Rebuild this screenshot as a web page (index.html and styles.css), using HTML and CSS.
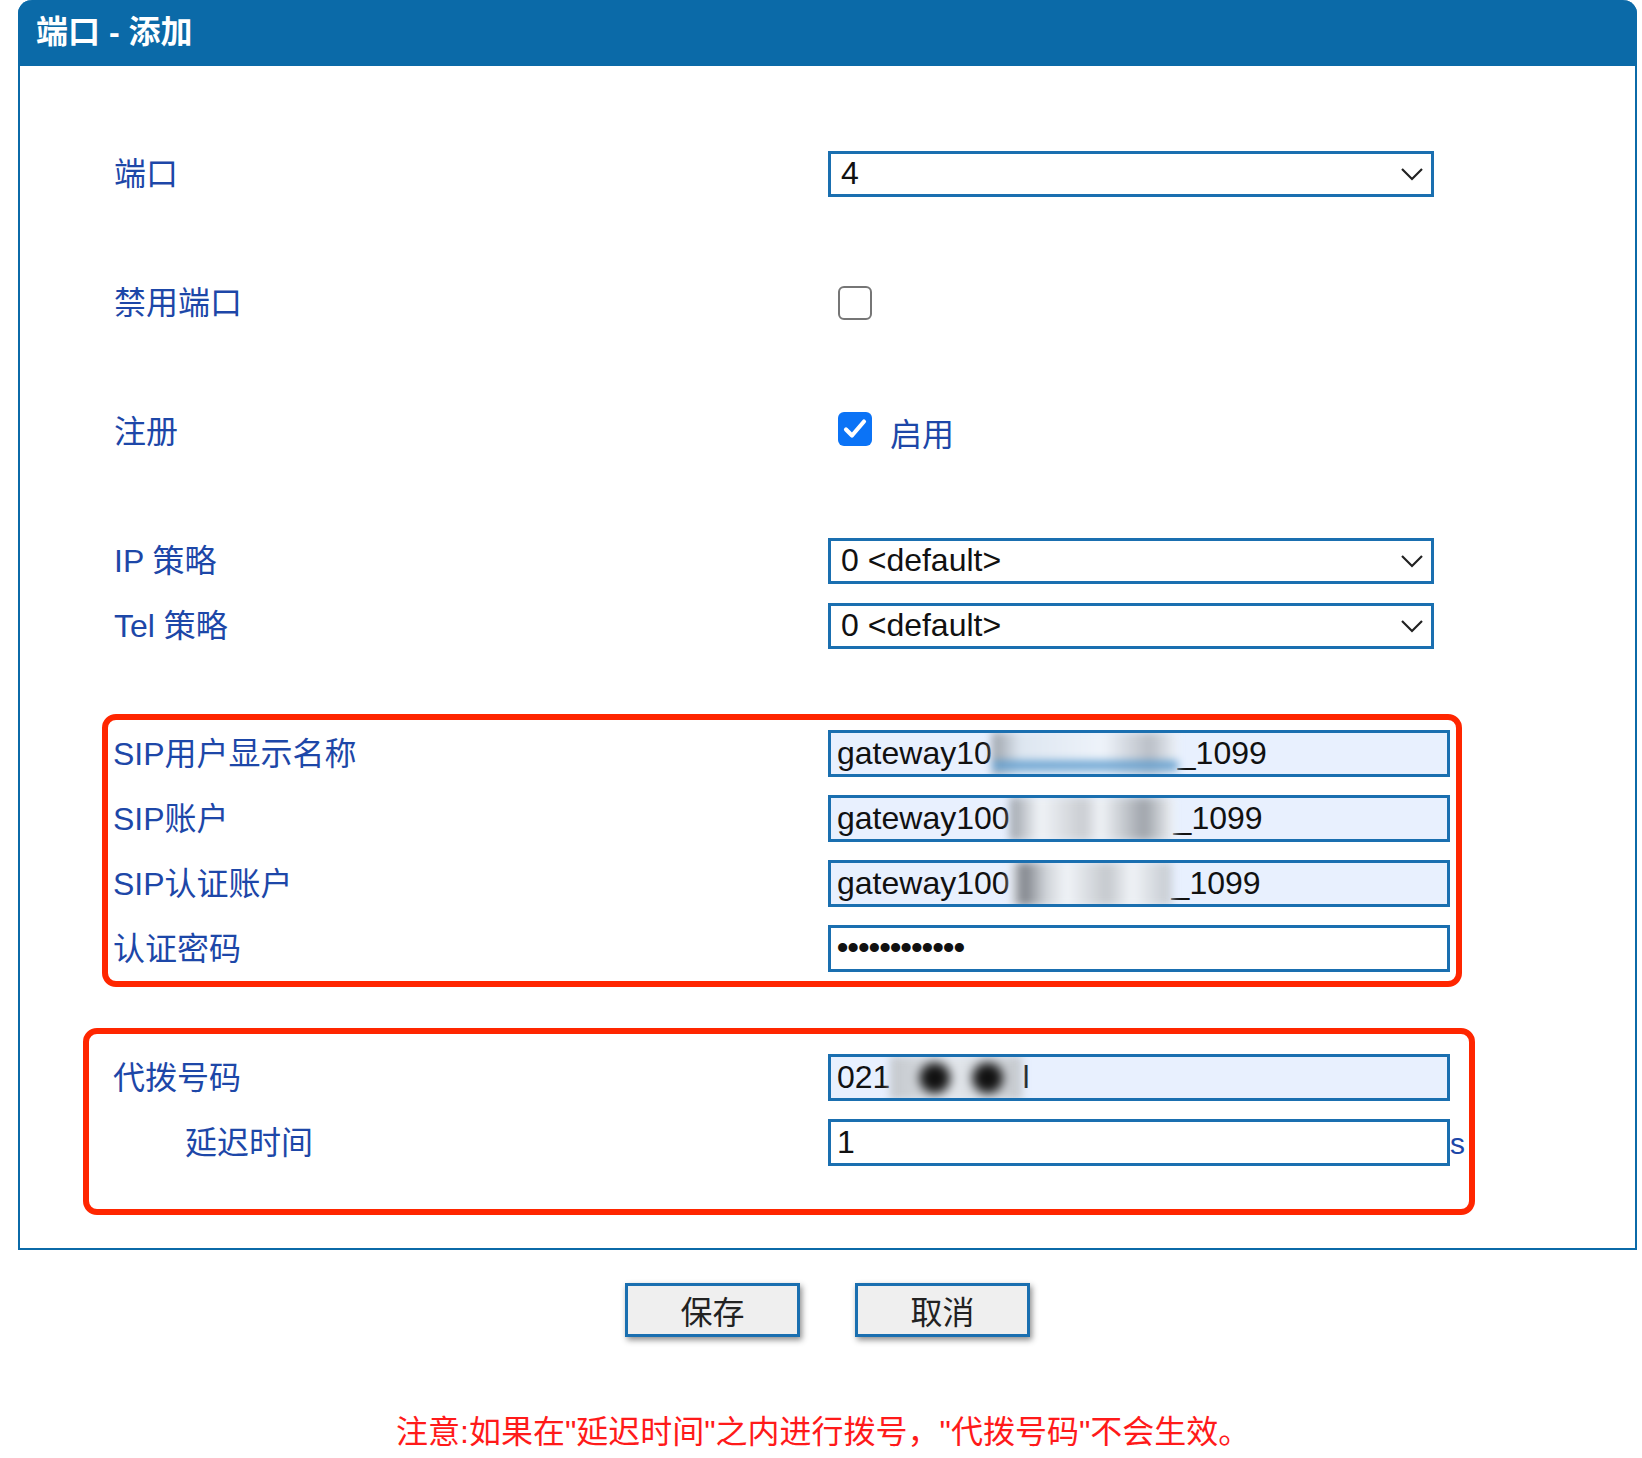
FILE: index.html
```html
<!DOCTYPE html>
<html lang="zh-CN">

<head>
    <meta charset="UTF-8">
    <title>端口 - 添加</title>
    <link rel="stylesheet" href="styles.css">
</head>

<body>
    <div class="panel">
        <div class="panel-title">端口 - 添加</div>

        <div class="panel-body">
            <div class="row spaced">
                <div class="label">端口</div>
                <div class="select-box">
                    <span>4</span>
                    <svg class="chevron" width="24" height="14" viewBox="0 0 24 14">
                        <polyline points="2,2 12,12 22,2" fill="none" stroke="#222" stroke-width="2.2" />
                    </svg>
                </div>
            </div>

            <div class="row spaced">
                <div class="label">禁用端口</div>
                <span class="checkbox"></span>
            </div>

            <div class="row spaced">
                <div class="label">注册</div>
                <span class="checkbox checked">
                    <svg width="34" height="34" viewBox="0 0 34 34">
                        <polyline points="8,17.5 14,23.5 26,9.5" fill="none" stroke="#fff" stroke-width="4.2"
                            stroke-linecap="round" stroke-linejoin="round" />
                    </svg>
                </span>
                <span class="check-text">启用</span>
            </div>

            <div class="row">
                <div class="label">IP 策略</div>
                <div class="select-box">
                    <span>0 &lt;default&gt;</span>
                    <svg class="chevron" width="24" height="14" viewBox="0 0 24 14">
                        <polyline points="2,2 12,12 22,2" fill="none" stroke="#222" stroke-width="2.2" />
                    </svg>
                </div>
            </div>

            <div class="row">
                <div class="label">Tel 策略</div>
                <div class="select-box">
                    <span>0 &lt;default&gt;</span>
                    <svg class="chevron" width="24" height="14" viewBox="0 0 24 14">
                        <polyline points="2,2 12,12 22,2" fill="none" stroke="#222" stroke-width="2.2" />
                    </svg>
                </div>
            </div>

            <!-- SIP account block -->
            <div class="mark mark-sip">
                <div class="row">
                    <div class="label">SIP用户显示名称</div>
                    <div class="text-box filled">gateway10<span class="blur blur-a"></span>_1099</div>
                </div>
                <div class="row">
                    <div class="label">SIP账户</div>
                    <div class="text-box filled">gateway100<span class="blur blur-b"></span>_1099</div>
                </div>
                <div class="row">
                    <div class="label">SIP认证账户</div>
                    <div class="text-box filled">gateway100<span class="blur blur-c"></span>_1099</div>
                </div>
                <div class="row">
                    <div class="label">认证密码</div>
                    <div class="text-box dots">••••••••••••</div>
                </div>
            </div>

            <!-- prefix dial block -->
            <div class="mark mark-dial">
                <div class="row">
                    <div class="label">代拨号码</div>
                    <div class="text-box filled">021<span class="blur blur-d"></span>l</div>
                </div>
                <div class="row">
                    <div class="label indent">延迟时间</div>
                    <div class="text-box">1</div>
                    <span class="unit">s</span>
                </div>
            </div>
        </div>
    </div>

    <div class="actions">
        <button class="btn">保存</button>
        <button class="btn">取消</button>
    </div>

    <p class="note">注意:如果在"延迟时间"之内进行拨号，"代拨号码"不会生效。</p>
</body>

</html>
```

FILE: styles.css
```css
/* page */
body {
    margin: 0;
    background-color: white;
    font-family: "Liberation Sans", "Noto Sans CJK SC", sans-serif;
}

.panel {
    margin-left: 18px;
    width: 1619px;
    box-sizing: border-box;
    border: 2px solid #0b6aa8;
    border-top: none;
    border-radius: 14px 14px 0 0;
}

.panel-title {
    height: 66px;
    margin: 0 -2px;
    padding-left: 18px;
    background-color: #0b6aa8;
    border-radius: 14px 14px 0 0;
    color: white;
    font-size: 32px;
    font-weight: bold;
    line-height: 64px;
}

.panel-body {
    padding: 75px 0 33px 94px;
}

/* form rows */
.row {
    display: flex;
    align-items: center;
    height: 65px;
}

.row.spaced {
    margin-bottom: 64px;
}

.label {
    width: 714px;
    flex-shrink: 0;
    color: #1d47a8;
    font-size: 32px;
    line-height: 40px;
}

.label.indent {
    padding-left: 72px;
    width: 642px;
}

.select-box {
    display: flex;
    align-items: center;
    justify-content: space-between;
    width: 606px;
    height: 46px;
    box-sizing: border-box;
    padding: 0 7px 0 10px;
    border: 3px solid #1a6fb0;
    background-color: white;
    color: #111;
    font-size: 32px;
}

.text-box {
    display: flex;
    align-items: center;
    width: 622px;
    height: 47px;
    box-sizing: border-box;
    padding-left: 6px;
    border: 3px solid #1a6fb0;
    background-color: white;
    color: #111;
    font-size: 32px;
    white-space: nowrap;
    overflow: hidden;
}

.text-box.filled {
    background-color: #e8f0fe;
}

.text-box.dots {
    font-size: 32px;
    font-weight: bold;
    letter-spacing: -0.6px;
    padding-bottom: 3px;
}

.unit {
    color: #1d47a8;
    font-size: 30px;
    margin-top: 2px;
}

/* checkboxes */
.checkbox {
    display: inline-block;
    width: 34px;
    height: 34px;
    box-sizing: border-box;
    margin-left: 10px;
    border: 2.5px solid #767676;
    border-radius: 6px;
    background-color: white;
}

.checkbox.checked {
    border: none;
    background-color: #0b73f6;
    margin-top: -6px;
}

.checkbox svg {
    display: block;
}

.check-text {
    margin-left: 18px;
    color: #1d47a8;
    font-size: 32px;
}

/* hidden values */
.blur {
    display: inline-block;
    height: 44px;
    filter: blur(4px);
}

.blur-a {
    width: 186px;
    background:
        linear-gradient(to bottom, transparent 62%, #4a90c8 72%, #7fb1da 84%, transparent 92%),
        linear-gradient(to right, #9aa0a8 0%, #dde6f0 15%, #eef3fa 60%, #b9bec6 85%, #eef3fa 100%);
}

.blur-b {
    width: 164px;
    background:
        linear-gradient(to right, #9aa0a8 0%, #f1f4f8 18%, #c9ccd1 45%, #f1f4f8 55%, #9ea3aa 82%, #f1f4f8 100%);
}

.blur-c {
    width: 162px;
    background:
        linear-gradient(to right, #f1f4f8 0%, #7c8087 8%, #cfd3d8 22%, #f1f4f8 35%, #c4c8cd 60%, #f1f4f8 75%, #cbd0d6 95%);
}

.blur-d {
    width: 132px;
    background:
        radial-gradient(circle at 34% 50%, #111 0, #111 10px, transparent 20px),
        radial-gradient(circle at 74% 50%, #111 0, #111 10px, transparent 20px),
        linear-gradient(to right, #c4c8cd, #e2e6eb 50%, #c4c8cd);
}

/* red marks */
.mark {
    box-sizing: border-box;
    border: 6px solid #ff2600;
    border-radius: 14px;
}

.mark-sip {
    width: 1360px;
    margin: 56px 0 0 -12px;
    padding: 1px 0 0 5px;
}

.mark-dial {
    width: 1392px;
    margin: 41px 0 0 -31px;
    padding: 11px 0 34px 24px;
}

.mark-dial .label {
    width: 715px;
}

.mark-dial .label.indent {
    width: 643px;
}

.mark-sip .label {
    width: 715px;
}

/* buttons */
.actions {
    display: flex;
    justify-content: center;
    gap: 55px;
    margin-top: 33px;
    padding-left: 18px;
    width: 1619px;
}

.btn {
    width: 175px;
    height: 54px;
    border: 3px solid #1a6fb0;
    background-color: #efefef;
    box-shadow: 2px 3px 6px rgba(0, 0, 0, 0.45);
    color: #222;
    font-family: "Liberation Sans", "Noto Sans CJK SC", sans-serif;
    font-size: 32px;
    cursor: pointer;
}

.note {
    margin: 0;
    padding-top: 75px;
    padding-left: 396px;
    color: #ff1a1a;
    font-size: 32px;
    line-height: 40px;
}
```
